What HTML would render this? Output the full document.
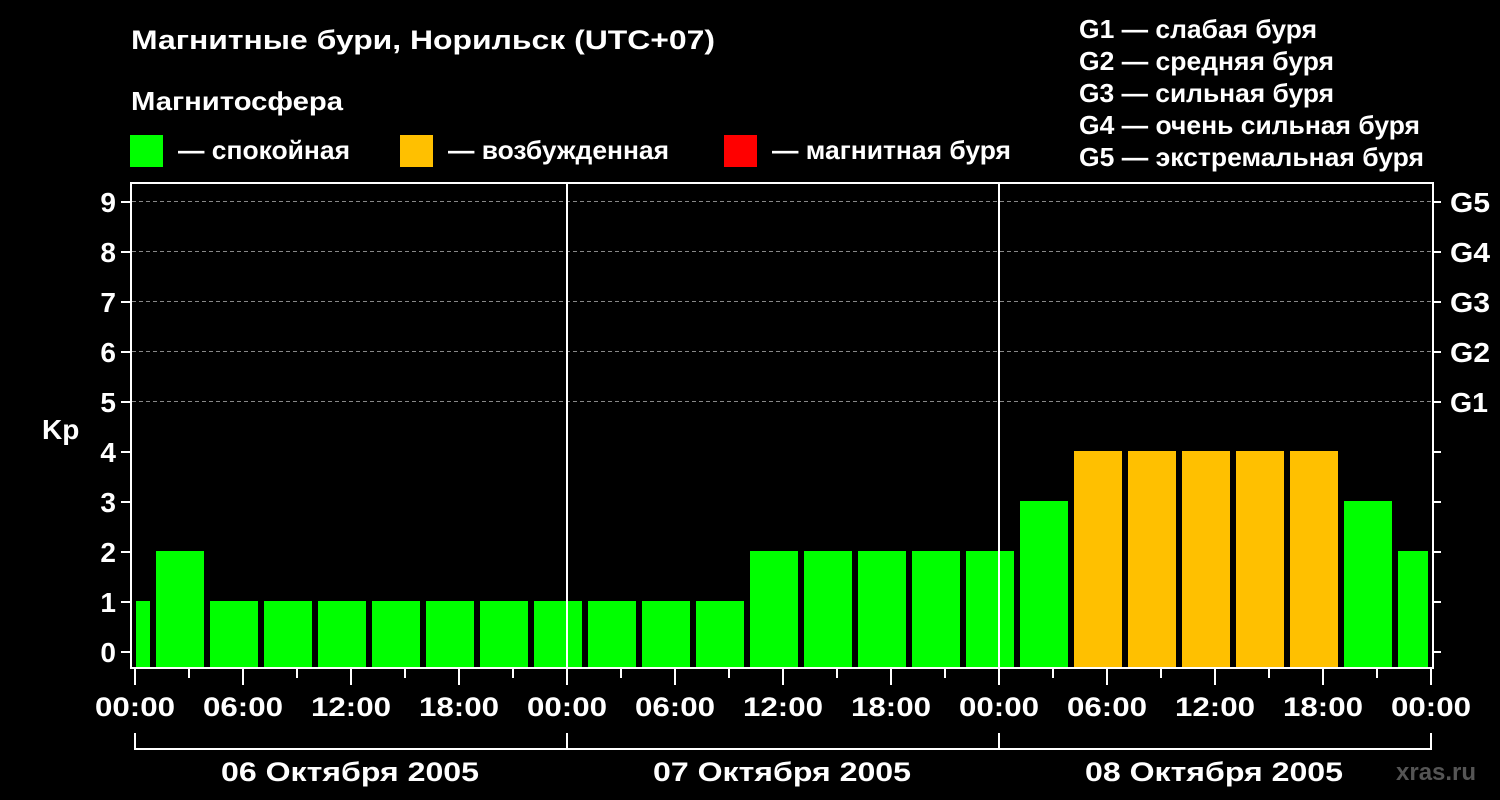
<!DOCTYPE html>
<html><head><meta charset="utf-8"><style>html,body{margin:0;padding:0;background:#000;width:1500px;height:800px;overflow:hidden}svg{display:block}text{font-family:"Liberation Sans",Arial,sans-serif;font-weight:bold;fill:#fff}</style></head><body>
<svg width="1500" height="800" viewBox="0 0 1500 800" xmlns="http://www.w3.org/2000/svg">
<rect width="1500" height="800" fill="#000"/>
<text x="131" y="49" font-size="27" textLength="584" lengthAdjust="spacingAndGlyphs">Магнитные бури, Норильск (UTC+07)</text>
<text x="131" y="110" font-size="26" textLength="212" lengthAdjust="spacingAndGlyphs">Магнитосфера</text>
<rect x="130" y="135" width="33" height="32" fill="#00ff00"/>
<text x="178" y="159" font-size="26" textLength="172" lengthAdjust="spacingAndGlyphs">— спокойная</text>
<rect x="400" y="135" width="33" height="32" fill="#ffc000"/>
<text x="448" y="159" font-size="26" textLength="221" lengthAdjust="spacingAndGlyphs">— возбужденная</text>
<rect x="724" y="135" width="33" height="32" fill="#ff0000"/>
<text x="772" y="159" font-size="26" textLength="239" lengthAdjust="spacingAndGlyphs">— магнитная буря</text>
<g font-size="26">
<text x="1079" y="38" textLength="238" lengthAdjust="spacingAndGlyphs">G1 — слабая буря</text>
<text x="1079" y="70" textLength="255" lengthAdjust="spacingAndGlyphs">G2 — средняя буря</text>
<text x="1079" y="102" textLength="255" lengthAdjust="spacingAndGlyphs">G3 — сильная буря</text>
<text x="1079" y="134" textLength="341" lengthAdjust="spacingAndGlyphs">G4 — очень сильная буря</text>
<text x="1079" y="166" textLength="345" lengthAdjust="spacingAndGlyphs">G5 — экстремальная буря</text>
</g>
<g stroke="#888" stroke-width="1" stroke-dasharray="4,3">
<line x1="132" y1="201.5" x2="1432" y2="201.5"/><line x1="132" y1="251.5" x2="1432" y2="251.5"/><line x1="132" y1="301.5" x2="1432" y2="301.5"/><line x1="132" y1="351.5" x2="1432" y2="351.5"/><line x1="132" y1="401.5" x2="1432" y2="401.5"/>
</g>
<g fill="#00ff00">
<rect x="136" y="601" width="14" height="67"/>
<rect x="156" y="551" width="48" height="117"/>
<rect x="210" y="601" width="48" height="67"/><rect x="264" y="601" width="48" height="67"/><rect x="318" y="601" width="48" height="67"/><rect x="372" y="601" width="48" height="67"/><rect x="426" y="601" width="48" height="67"/><rect x="480" y="601" width="48" height="67"/><rect x="534" y="601" width="48" height="67"/><rect x="588" y="601" width="48" height="67"/><rect x="642" y="601" width="48" height="67"/><rect x="696" y="601" width="48" height="67"/>
<rect x="750" y="551" width="48" height="117"/><rect x="804" y="551" width="48" height="117"/><rect x="858" y="551" width="48" height="117"/><rect x="912" y="551" width="48" height="117"/><rect x="966" y="551" width="48" height="117"/>
<rect x="1020" y="501" width="48" height="167"/>
<rect x="1344" y="501" width="48" height="167"/>
<rect x="1398" y="551" width="30" height="117"/>
</g>
<g fill="#ffc000">
<rect x="1074" y="451" width="48" height="217"/><rect x="1128" y="451" width="48" height="217"/><rect x="1182" y="451" width="48" height="217"/><rect x="1236" y="451" width="48" height="217"/><rect x="1290" y="451" width="48" height="217"/>
</g>
<g stroke="#fff" stroke-width="2" fill="none">
<line x1="567" y1="183" x2="567" y2="668"/><line x1="999" y1="183" x2="999" y2="668"/>
<rect x="131" y="183" width="1302" height="485"/>
</g>
<g stroke="#fff" stroke-width="2">
<line x1="121" y1="652" x2="131" y2="652"/><line x1="121" y1="602" x2="131" y2="602"/><line x1="121" y1="552" x2="131" y2="552"/><line x1="121" y1="502" x2="131" y2="502"/><line x1="121" y1="452" x2="131" y2="452"/><line x1="121" y1="402" x2="131" y2="402"/><line x1="121" y1="352" x2="131" y2="352"/><line x1="121" y1="302" x2="131" y2="302"/><line x1="121" y1="252" x2="131" y2="252"/><line x1="121" y1="202" x2="131" y2="202"/>
<line x1="1433" y1="652" x2="1441" y2="652"/><line x1="1433" y1="602" x2="1441" y2="602"/><line x1="1433" y1="552" x2="1441" y2="552"/><line x1="1433" y1="502" x2="1441" y2="502"/><line x1="1433" y1="452" x2="1441" y2="452"/><line x1="1433" y1="402" x2="1441" y2="402"/><line x1="1433" y1="352" x2="1441" y2="352"/><line x1="1433" y1="302" x2="1441" y2="302"/><line x1="1433" y1="252" x2="1441" y2="252"/><line x1="1433" y1="202" x2="1441" y2="202"/>
<line x1="135" y1="668" x2="135" y2="685"/><line x1="189" y1="668" x2="189" y2="678"/><line x1="243" y1="668" x2="243" y2="685"/><line x1="297" y1="668" x2="297" y2="678"/><line x1="351" y1="668" x2="351" y2="685"/><line x1="405" y1="668" x2="405" y2="678"/><line x1="459" y1="668" x2="459" y2="685"/><line x1="513" y1="668" x2="513" y2="678"/><line x1="567" y1="668" x2="567" y2="685"/><line x1="621" y1="668" x2="621" y2="678"/><line x1="675" y1="668" x2="675" y2="685"/><line x1="729" y1="668" x2="729" y2="678"/><line x1="783" y1="668" x2="783" y2="685"/><line x1="837" y1="668" x2="837" y2="678"/><line x1="891" y1="668" x2="891" y2="685"/><line x1="945" y1="668" x2="945" y2="678"/><line x1="999" y1="668" x2="999" y2="685"/><line x1="1053" y1="668" x2="1053" y2="678"/><line x1="1107" y1="668" x2="1107" y2="685"/><line x1="1161" y1="668" x2="1161" y2="678"/><line x1="1215" y1="668" x2="1215" y2="685"/><line x1="1269" y1="668" x2="1269" y2="678"/><line x1="1323" y1="668" x2="1323" y2="685"/><line x1="1377" y1="668" x2="1377" y2="678"/><line x1="1431" y1="668" x2="1431" y2="685"/>
<polyline fill="none" points="135,733 135,749 1431,749 1431,733"/>
<line x1="567" y1="733" x2="567" y2="749"/><line x1="999" y1="733" x2="999" y2="749"/>
</g>
<g font-size="28" text-anchor="end">
<text x="116" y="662">0</text><text x="116" y="612">1</text><text x="116" y="562">2</text><text x="116" y="512">3</text><text x="116" y="462">4</text><text x="116" y="412">5</text><text x="116" y="362">6</text><text x="116" y="312">7</text><text x="116" y="262">8</text><text x="116" y="212">9</text>
</g>
<text x="42" y="439" font-size="28">Kp</text>
<g font-size="28">
<text x="1450" y="412" textLength="38" lengthAdjust="spacingAndGlyphs">G1</text><text x="1450" y="362" textLength="40" lengthAdjust="spacingAndGlyphs">G2</text><text x="1450" y="312" textLength="40" lengthAdjust="spacingAndGlyphs">G3</text><text x="1450" y="262" textLength="40" lengthAdjust="spacingAndGlyphs">G4</text><text x="1450" y="212" textLength="40" lengthAdjust="spacingAndGlyphs">G5</text>
</g>
<g font-size="27">
<text x="95" y="716" textLength="80" lengthAdjust="spacingAndGlyphs">00:00</text><text x="203" y="716" textLength="80" lengthAdjust="spacingAndGlyphs">06:00</text><text x="311" y="716" textLength="80" lengthAdjust="spacingAndGlyphs">12:00</text><text x="419" y="716" textLength="80" lengthAdjust="spacingAndGlyphs">18:00</text><text x="527" y="716" textLength="80" lengthAdjust="spacingAndGlyphs">00:00</text><text x="635" y="716" textLength="80" lengthAdjust="spacingAndGlyphs">06:00</text><text x="743" y="716" textLength="80" lengthAdjust="spacingAndGlyphs">12:00</text><text x="851" y="716" textLength="80" lengthAdjust="spacingAndGlyphs">18:00</text><text x="959" y="716" textLength="80" lengthAdjust="spacingAndGlyphs">00:00</text><text x="1067" y="716" textLength="80" lengthAdjust="spacingAndGlyphs">06:00</text><text x="1175" y="716" textLength="80" lengthAdjust="spacingAndGlyphs">12:00</text><text x="1283" y="716" textLength="80" lengthAdjust="spacingAndGlyphs">18:00</text><text x="1391" y="716" textLength="80" lengthAdjust="spacingAndGlyphs">00:00</text>
<text x="221" y="781" textLength="258" lengthAdjust="spacingAndGlyphs">06 Октября 2005</text>
<text x="653" y="781" textLength="258" lengthAdjust="spacingAndGlyphs">07 Октября 2005</text>
<text x="1085" y="781" textLength="258" lengthAdjust="spacingAndGlyphs">08 Октября 2005</text>
</g>
<text x="1396" y="780" font-size="24" style="fill:#555">xras.ru</text>
</svg>
</body></html>
